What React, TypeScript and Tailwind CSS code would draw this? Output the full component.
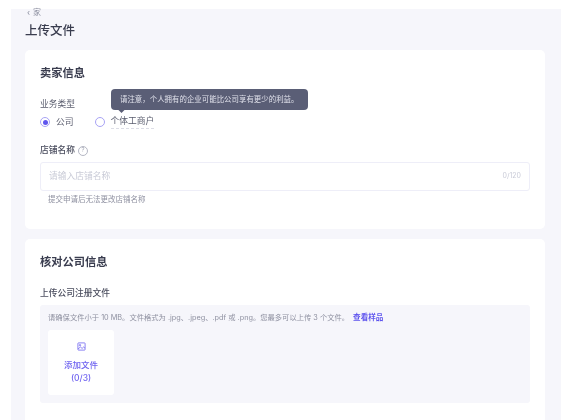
const font = { fontFamily: '"Inter", "Noto Sans CJK SC", sans-serif' };

function ImageIcon() {
  return (
    <svg width="9" height="9" viewBox="0 0 9 9" fill="none" stroke="#6f63f0" strokeWidth="0.8">
      <rect x="0.9" y="0.9" width="7.2" height="7.2" rx="0.6" />
      <circle cx="3" cy="3.2" r="0.7" />
      <path d="M1 7l2.4-2 1.7 1.4L6.6 5 8 6.2" />
    </svg>
  );
}

function Radio({ checked, label, dotted }: { checked?: boolean; label: string; dotted?: boolean }) {
  return (
    <div className="flex items-center gap-[6px]">
      <span className="flex h-[10px] w-[10px] items-center justify-center rounded-full border border-[#a8a3f5] bg-white">
        {checked && <span className="h-[5px] w-[5px] rounded-full bg-[#5f55ee]" />}
      </span>
      <span
        className={
          "text-[8.75px] leading-[13px] text-[#5a5d6e] " +
          (dotted ? "border-b border-dashed border-[#dcdde6]" : "")
        }
      >
        {label}
      </span>
    </div>
  );
}

export default function App() {
  return (
    <div className="h-[420px] w-[561px] overflow-hidden bg-white pl-[11px] pt-[9px] blur-[0.4px]" style={font}>
      <div className="h-full bg-[#f6f6fb] pl-[14px] pr-[16px]">
        <div className="flex h-[7px] items-center gap-[3px] pl-[2px] text-[8px] leading-[7px] text-[#8b8e9f]">
          <span>‹</span>
          <span>家</span>
        </div>
        <h1 className="mt-[6px] h-[17px] text-[12.5px] font-medium leading-[17px] text-[#3a3d4f]">上传文件</h1>

        <section className="relative mt-[11px] h-[179px] rounded-[5px] bg-white px-[15px] pt-[16px]">
          <h2 className="text-[11.25px] font-semibold leading-[14px] text-[#3a3d4f]">卖家信息</h2>
          <div className="mt-[18px] text-[8.75px] leading-[13px] text-[#5a5d6e]">业务类型</div>
          <div className="mt-[4px] flex items-center gap-[21px]">
            <Radio checked label="公司" />
            <Radio label="个体工商户" dotted />
          </div>

          <div className="absolute left-[86px] top-[39px] rounded-[4px] bg-[#5a5e76] px-[9px] py-[4px] text-[7.45px] leading-[13px] whitespace-nowrap text-[#dfe0ea]">
            请注意，个人拥有的企业可能比公司享有更少的利益。
            <span className="absolute -bottom-[2px] left-[8px] h-[5px] w-[5px] rotate-45 bg-[#5a5e76]" />
          </div>

          <div className="mt-[15px] flex items-center gap-[3px] text-[8.75px] font-medium leading-[13px] text-[#4a4d5e]">
            店铺名称
            <span className="flex h-[10px] w-[10px] items-center justify-center rounded-full border border-[#b5b7c4] text-[6.5px] leading-none font-normal text-[#a9abb9]">
              ?
            </span>
          </div>
          <div className="mt-[5px] flex h-[29px] items-center justify-between rounded-[3px] border border-[#eeeef8] pl-[8px] pr-[8px]">
            <span className="text-[8.75px] text-[#c9cbd7]">请输入店铺名称</span>
            <span className="text-[7px] text-[#c9cbd7]">0/120</span>
          </div>
          <div className="mt-[3px] pl-[8px] text-[7.5px] leading-[12px] text-[#8f91a1]">提交申请后无法更改店铺名称</div>
        </section>

        <section className="mt-[10px] h-[200px] rounded-[5px] bg-white px-[15px] pt-[16px]">
          <h2 className="text-[11.25px] font-semibold leading-[15px] text-[#3a3d4f]">核对公司信息</h2>
          <div className="mt-[17px] text-[8.75px] font-medium leading-[13px] text-[#4a4d5e]">上传公司注册文件</div>
          <div className="mt-[5px] h-[98px] rounded-[3px] bg-[#f6f6fb] px-[8px] pt-[7px]">
            <p className="text-[7.3px] leading-[12px] whitespace-nowrap text-[#8f91a1]">
              请确保文件小于 10 MB。文件格式为 .jpg、.jpeg、.pdf 或 .png。您最多可以上传 3 个文件。
              <span className="ml-[4px] text-[7.6px] font-semibold text-[#5f55ee]">查看样品</span>
            </p>
            <div className="mt-[6px] flex h-[65px] w-[66px] flex-col items-center rounded-[3px] bg-white pt-[12px] text-[#6f63f0]">
              <ImageIcon />
              <span className="mt-[8px] text-[8.5px] font-medium leading-[13px]">添加文件</span>
              <span className="text-[8.5px] font-medium leading-[13px]">(0/3)</span>
            </div>
          </div>
        </section>
      </div>
    </div>
  );
}
